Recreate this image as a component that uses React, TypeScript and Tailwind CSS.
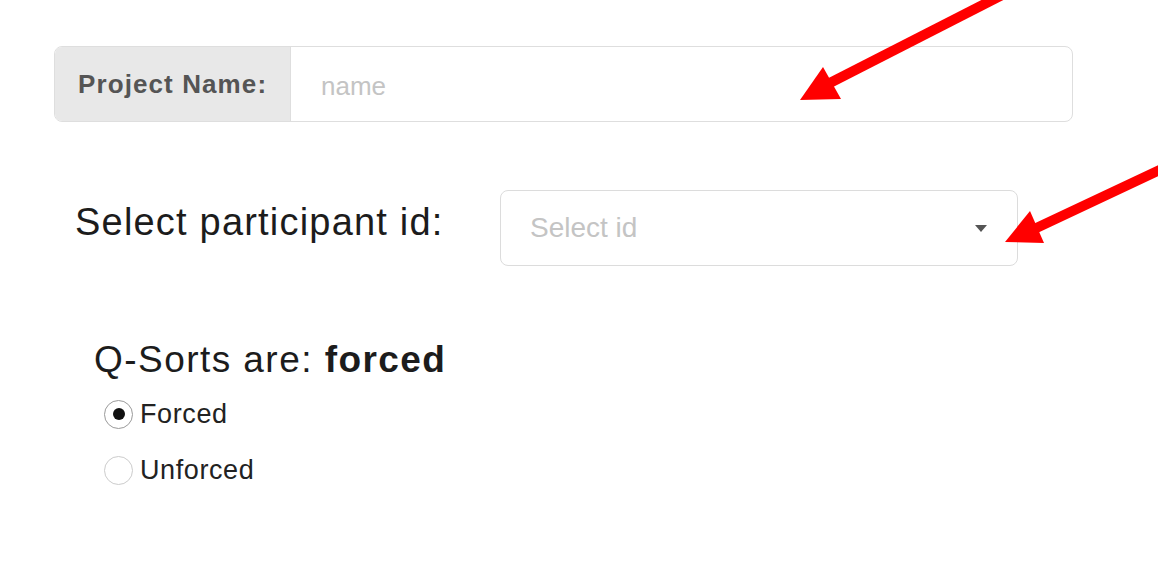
const font = { fontFamily: '"Liberation Sans", Arial, sans-serif' }

function Arrows() {
  return (
    <svg className="absolute inset-0 pointer-events-none" width="1158" height="572" viewBox="0 0 1158 572">
      <line x1="1010" y1="-9" x2="824" y2="86" stroke="#ff0000" strokeWidth="10" />
      <polygon points="800,100 823,67 841,99" fill="#ff0000" />
      <line x1="1170" y1="165" x2="1030" y2="231" stroke="#ff0000" strokeWidth="10" />
      <polygon points="1005,242 1030,211 1044,243" fill="#ff0000" />
    </svg>
  )
}

function Radio({ label, checked }: { label: string; checked?: boolean }) {
  return (
    <label className="flex items-center h-[30px]">
      <span
        className={
          'flex items-center justify-center w-[29px] h-[29px] rounded-full border bg-white ' +
          (checked ? 'border-[#9a9a9a]' : 'border-[#cccccc]')
        }
      >
        {checked && <span className="w-[12px] h-[12px] rounded-full bg-[#111]" />}
      </span>
      <span className="ml-[7px] text-[27px] text-[#222] leading-none tracking-[0.6px]">{label}</span>
    </label>
  )
}

export default function App() {
  return (
    <div className="relative w-[1158px] h-[572px] bg-white overflow-hidden" style={font}>
      <div className="pt-[46px] pl-[54px]">
        <div className="flex w-[1019px] h-[76px] border border-[#dedede] rounded-[8px] overflow-hidden">
          <div className="w-[236px] bg-[#e8e8e8] flex items-center pl-[23px] text-[26px] font-bold text-[#555] tracking-[1.1px] border-r border-[#dedede]">
            Project Name:
          </div>
          <div className="flex-1 flex items-center pl-[30px] pt-[4px] text-[26px] text-[#c4c4c4]">name</div>
        </div>

        <div className="flex items-start mt-[68px]">
          <div className="ml-[21px] w-[425px] pt-[12px] text-[38px] text-[#1c1c1c] leading-[40px] tracking-[1.2px]">
            Select participant id:
          </div>
          <div className="w-[518px] h-[76px] border border-[#dcdcdc] rounded-[8px] flex items-center justify-between pl-[29px] pr-[30px]">
            <span className="text-[28px] text-[#c4c4c4]">Select id</span>
            <span className="w-0 h-0 border-l-[6px] border-r-[6px] border-t-[7px] border-l-transparent border-r-transparent border-t-[#555]" />
          </div>
        </div>

        <div className="ml-[40px] mt-[74px]">
          <div className="text-[37px] text-[#1c1c1c] leading-[40px] tracking-[1.45px]">
            Q-Sorts are: <span className="font-bold">forced</span>
          </div>
          <div className="mt-[19px] ml-[10px] flex flex-col gap-[26px]">
            <Radio label="Forced" checked />
            <Radio label="Unforced" />
          </div>
        </div>
      </div>
      <Arrows />
    </div>
  )
}
